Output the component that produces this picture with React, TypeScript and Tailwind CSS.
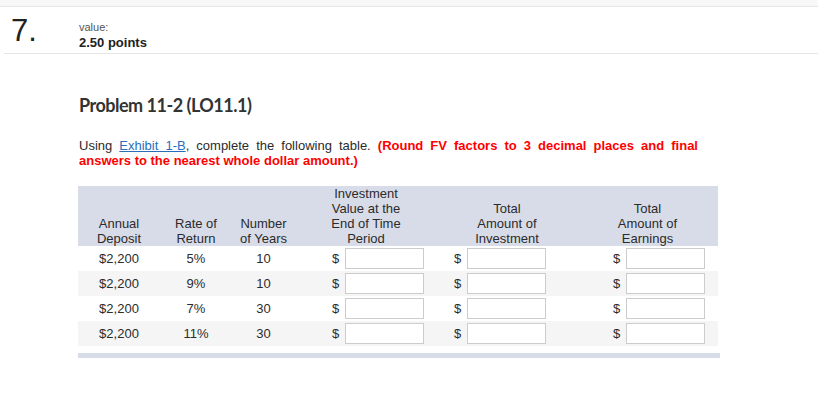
import React from "react";

const rows = [
  { dep: "$2,200", rate: "5%", yrs: "10", alt: false },
  { dep: "$2,200", rate: "9%", yrs: "10", alt: true },
  { dep: "$2,200", rate: "7%", yrs: "30", alt: false },
  { dep: "$2,200", rate: "11%", yrs: "30", alt: true },
];

function Money({ pl }: { pl: string }) {
  return (
    <div className={`flex items-center gap-[6px] ${pl}`}>
      <span className="w-[7px]">$</span>
      <div className="w-[79px] h-[21px] border border-[#cccccc] bg-white" />
    </div>
  );
}

export default function App() {
  return (
    <div
      className="w-[818px] h-[397px] bg-white text-[#2b2b2b] overflow-hidden"
      style={{ fontFamily: '"Liberation Sans", Arial, sans-serif' }}
    >
      <div className="h-[7px] bg-[#f8f8f8] border-b border-[#e6e6e6]" />
      <div className="ml-[4px] h-[47px] border-b border-[#e6e6e6] flex">
        <div className="w-[75px] pl-[7px] pt-[7px] text-[31px] leading-[34px] text-[#222]">7.</div>
        <div className="pt-[14px]">
          <div className="text-[11px] leading-[13px] text-[#555]">value:</div>
          <div className="text-[13px] leading-[15px] font-bold text-[#222] mt-[1px]">2.50 points</div>
        </div>
      </div>
      <div className="pl-[79px]">
        <div
          className="mt-[40px] text-[18px] leading-[22px] font-bold tracking-[-0.5px] text-[#333]"
          style={{ fontFamily: 'Lato, "Liberation Sans", sans-serif' }}
        >
          Problem 11-2 (LO11.1)
        </div>
        <p className="mt-[22px] w-[619px] text-[13px] leading-[15px] text-justify">
          Using{" "}
          <span className="text-[#2a6ebb] underline">Exhibit 1-B</span>, complete the following table.{" "}
          <span className="font-bold text-[#ff0000]">
            (Round FV factors to 3 decimal places and final answers to the nearest whole dollar amount.)
          </span>
        </p>
      </div>
      <div className="ml-[78px] mt-[18px] w-[642px] text-[13px]">
        <div className="w-[640px] bg-[#d8dce8] h-[60px] flex items-end text-center leading-[15px]">
          <div className="w-[82px]">Annual<br />Deposit</div>
          <div className="w-[72px]">Rate of<br />Return</div>
          <div className="w-[63px]">Number<br />of Years</div>
          <div className="w-[142px]">Investment<br />Value at the<br />End of Time<br />Period</div>
          <div className="w-[140px]">Total<br />Amount of<br />Investment</div>
          <div className="w-[141px]">Total<br />Amount of<br />Earnings</div>
        </div>
        {rows.map((r, i) => (
          <div
            key={i}
            className={`w-[640px] h-[25px] flex items-center ${r.alt ? "bg-[#f5f5f5]" : "bg-white"}`}
          >
            <div className="w-[82px] text-center">{r.dep}</div>
            <div className="w-[72px] text-center">{r.rate}</div>
            <div className="w-[63px] text-center">{r.yrs}</div>
            <div className="w-[142px]"><Money pl="pl-[37px]" /></div>
            <div className="w-[140px]"><Money pl="pl-[17px]" /></div>
            <div className="w-[141px]"><Money pl="pl-[36px]" /></div>
          </div>
        ))}
        <div className="mt-[7px] h-[5px] w-[642px] bg-[#d8dce8]" />
      </div>
    </div>
  );
}
